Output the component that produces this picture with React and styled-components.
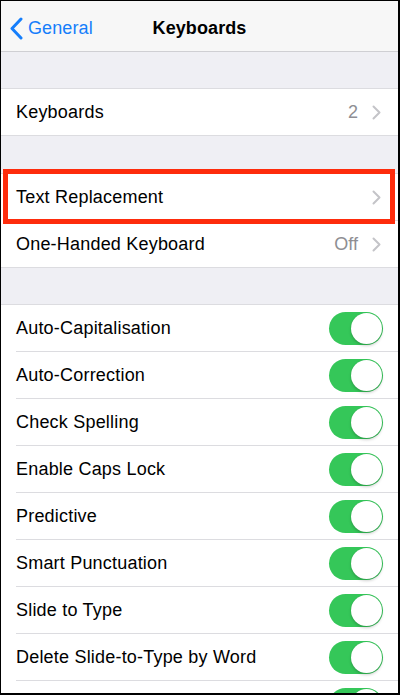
import React from 'react';
import styled, { createGlobalStyle } from 'styled-components';

const GlobalStyle = createGlobalStyle`
  html, body {
    margin: 0;
    padding: 0;
    background: #000;
  }
  * {
    box-sizing: border-box;
  }
`;

const Screen = styled.div`
  width: 400px;
  height: 695px;
  overflow: hidden;
  background: #efeff4;
  border-style: solid;
  border-color: #000;
  border-width: 1px 2px 2px 1px;
  font-family: "Liberation Sans", Arial, sans-serif;
  color: #000;
`;

const NavBar = styled.div`
  height: 51px;
  padding-top: 4px;
  background: #f7f7f7;
  border-bottom: 1px solid #cfcfd3;
  display: grid;
  grid-template-columns: 1fr auto 1fr;
  align-items: center;
`;

const BackButton = styled.div`
  display: flex;
  align-items: center;
  gap: 5px;
  padding-left: 8px;
  color: #157efb;
  font-size: 18px;
  letter-spacing: 0.1px;
`;

const Title = styled.div`
  font-size: 18px;
  font-weight: bold;
  letter-spacing: 0.1px;
`;

const Spacer = styled.div`
  height: ${p => p.h}px;
`;

const Group = styled.div`
  background: #fff;
  border-top: 1px solid #dcdce0;
  border-bottom: 1px solid #dcdce0;
`;

const Row = styled.div`
  position: relative;
  height: ${p => (p.last ? 46 : 47)}px;
  display: flex;
  align-items: center;
  padding: 0 15px;
  ${p => !p.last && `
    &::before {
      content: '';
      position: absolute;
      left: 15px;
      right: 0;
      bottom: 0;
      height: 1px;
      background: #dcdce0;
    }
  `}
  ${p => p.highlight && `
    &::after {
      content: '';
      position: absolute;
      top: -5px;
      left: 2px;
      right: 3px;
      bottom: -3px;
      border: 5px solid #fe2c0c;
      pointer-events: none;
    }
  `}
`;

const Label = styled.span`
  flex: 1;
  font-size: 18px;
  letter-spacing: 0.2px;
`;

const Detail = styled.span`
  font-size: 18px;
  color: #8e8e93;
  margin-right: 14px;
`;

const Toggle = styled.div`
  width: 54px;
  height: 33px;
  border-radius: 17px;
  background: ${p => (p.on ? '#35c759' : '#e5e5ea')};
  display: flex;
  align-items: center;
  justify-content: ${p => (p.on ? 'flex-end' : 'flex-start')};
  padding: 1px;
`;

const Knob = styled.div`
  width: 31px;
  height: 31px;
  border-radius: 50%;
  background: #fff;
  box-shadow: 0 2px 3px rgba(0, 0, 0, 0.18), 0 0 1px rgba(0, 0, 0, 0.15);
`;

const Chevron = () => (
  <svg width="9" height="15" viewBox="0 0 9 15" style={{ marginRight: 2 }}>
    <polyline points="1.5,1.5 7.5,7.5 1.5,13.5" fill="none" stroke="#c4c4c8" strokeWidth="2" strokeLinecap="round" strokeLinejoin="round" />
  </svg>
);

const BackChevron = () => (
  <svg width="14" height="23" viewBox="0 0 14 23">
    <polyline points="12,2 3,11.5 12,21" fill="none" stroke="#157efb" strokeWidth="3" strokeLinecap="round" strokeLinejoin="round" />
  </svg>
);

const toggles = [
  'Auto-Capitalisation',
  'Auto-Correction',
  'Check Spelling',
  'Enable Caps Lock',
  'Predictive',
  'Smart Punctuation',
  'Slide to Type',
  'Delete Slide-to-Type by Word',
  '',
];

export default function App() {
  return (
    <>
      <GlobalStyle />
      <Screen>
        <NavBar>
          <BackButton>
            <BackChevron />
            General
          </BackButton>
          <Title>Keyboards</Title>
          <div />
        </NavBar>
        <Spacer h={36} />
        <Group>
          <Row last>
            <Label>Keyboards</Label>
            <Detail>2</Detail>
            <Chevron />
          </Row>
        </Group>
        <Spacer h={37} />
        <Group>
          <Row highlight>
            <Label>Text Replacement</Label>
            <Chevron />
          </Row>
          <Row last>
            <Label>One-Handed Keyboard</Label>
            <Detail>Off</Detail>
            <Chevron />
          </Row>
        </Group>
        <Spacer h={36} />
        <Group>
          {toggles.map((t, i) => (
            <Row key={i} last={i === toggles.length - 1}>
              <Label>{t}</Label>
              <Toggle on>
                <Knob />
              </Toggle>
            </Row>
          ))}
        </Group>
      </Screen>
    </>
  );
}
